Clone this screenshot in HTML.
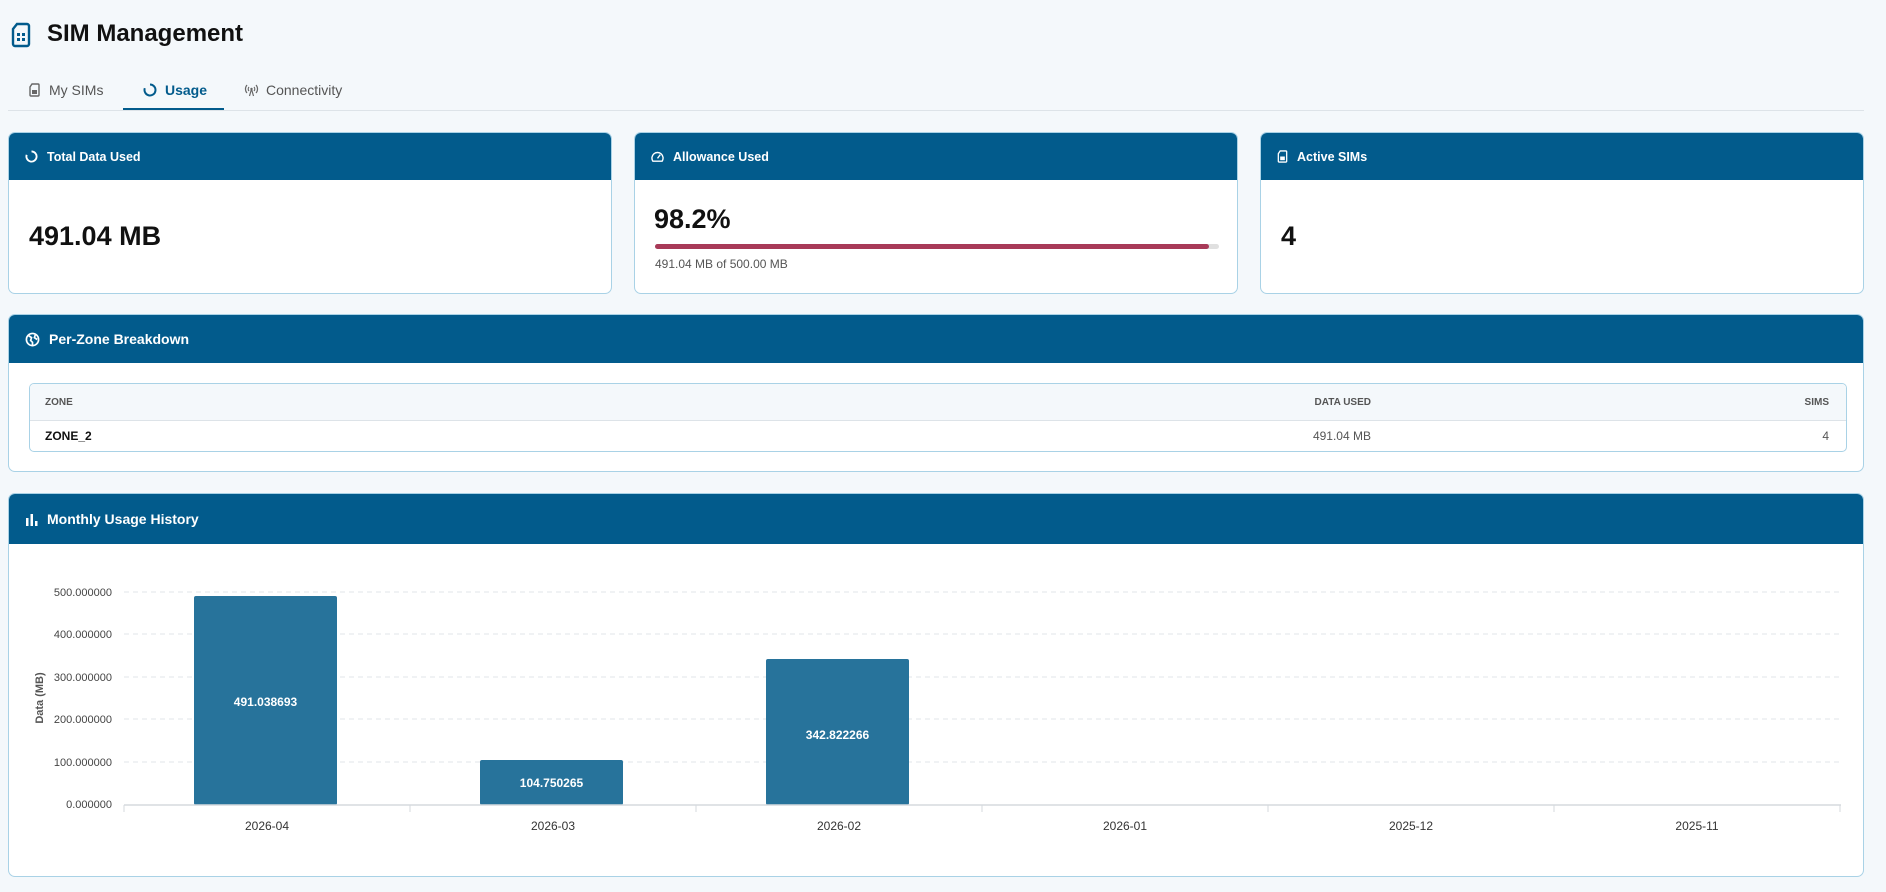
<!DOCTYPE html>
<html><head><meta charset="utf-8"><style>
*{box-sizing:border-box;margin:0;padding:0}
body{width:1886px;height:892px;background:#f4f8fb;font-family:"Liberation Sans",sans-serif;position:relative;overflow:hidden;color:#111}
.a{position:absolute}
.card{position:absolute;background:#fff;border:1px solid #a9d2e6;border-radius:7px;overflow:hidden}
.hd{position:absolute;left:0;top:0;right:0;background:#025b8c;color:#fff;font-weight:bold;display:flex;align-items:center;padding-left:16px}
.hd svg{margin-right:9px}
</style></head><body>
<svg class="a" style="left:11px;top:22px" width="20" height="26" viewBox="0 0 20 26"><path d="M6 2h10a2 2 0 0 1 2 2v18a2 2 0 0 1-2 2H4a2 2 0 0 1-2-2V7z" fill="none" stroke="#025b8c" stroke-width="2.4"/><g fill="#025b8c"><rect x="6" y="11" width="3" height="3"/><rect x="11" y="11" width="3" height="3"/><rect x="6" y="16" width="3" height="3"/><rect x="11" y="16" width="3" height="3"/></g></svg>
<div class="a" style="left:47px;top:20px;font-size:24px;font-weight:bold">SIM Management</div>

<svg class="a" style="left:29px;top:83px" width="11" height="14" viewBox="0 0 11 14"><path d="M3 1h6a1 1 0 0 1 1 1v10a1 1 0 0 1-1 1H2a1 1 0 0 1-1-1V4z" fill="none" stroke="#666" stroke-width="1.4"/><rect x="3" y="7" width="5" height="4" fill="#666"/></svg>
<div class="a" style="left:49px;top:82px;font-size:14px;color:#555">My SIMs</div>
<svg class="a" style="left:143px;top:83px" width="14" height="14" viewBox="0 0 14 14"><path d="M7 1.5a5.5 5.5 0 1 1-5.2 3.7" fill="none" stroke="#025b8c" stroke-width="2"/></svg>
<div class="a" style="left:165px;top:82px;font-size:14px;color:#025b8c;font-weight:bold">Usage</div>
<div class="a" style="left:123px;top:108px;width:101px;height:3px;background:#025b8c"></div>
<svg class="a" style="left:244px;top:83px" width="15" height="14" viewBox="0 0 15 14"><g fill="none" stroke="#666" stroke-width="1.2"><path d="M3 2a6 6 0 0 0 0 8M12 2a6 6 0 0 1 0 8M5 4a3 3 0 0 0 0 4M10 4a3 3 0 0 1 0 4M7.5 6l-2 7M7.5 6l2 7"/></g><circle cx="7.5" cy="6" r="1.2" fill="#666"/></svg>
<div class="a" style="left:266px;top:82px;font-size:14px;color:#555">Connectivity</div>
<div class="a" style="left:8px;top:110px;width:1856px;height:1px;background:#dde3e8"></div>

<div class="card" style="left:8px;top:132px;width:604px;height:162px">
<div class="hd" style="height:47px;font-size:12.5px"><svg width="13" height="13" viewBox="0 0 14 14"><path d="M7 1.5a5.5 5.5 0 1 1-5.2 3.7" fill="none" stroke="#fff" stroke-width="2"/></svg>Total Data Used</div>
<div class="a" style="left:20px;top:88px;font-size:27px;font-weight:bold">491.04 MB</div></div>

<div class="card" style="left:634px;top:132px;width:604px;height:162px">
<div class="hd" style="height:47px;font-size:12.5px"><svg width="13" height="13" viewBox="0 0 14 14"><path d="M2 12a6 6 0 1 1 10 0z" fill="none" stroke="#fff" stroke-width="1.5"/><path d="M7 9l3-4" stroke="#fff" stroke-width="1.5"/></svg>Allowance Used</div>
<div class="a" style="left:19px;top:71px;font-size:27px;font-weight:bold">98.2%</div>
<div class="a" style="left:20px;top:111px;width:564px;height:5px;background:#e0e0e0;border-radius:3px"><div style="width:554px;height:5px;background:#a83a58;border-radius:3px"></div></div>
<div class="a" style="left:20px;top:124px;font-size:12px;color:#555">491.04 MB of 500.00 MB</div></div>

<div class="card" style="left:1260px;top:132px;width:604px;height:162px">
<div class="hd" style="height:47px;font-size:12.5px"><svg width="11" height="13" viewBox="0 0 11 14"><path d="M3 1h6a1 1 0 0 1 1 1v10a1 1 0 0 1-1 1H2a1 1 0 0 1-1-1V4z" fill="none" stroke="#fff" stroke-width="1.4"/><rect x="3" y="7" width="5" height="4" fill="#fff"/></svg>Active SIMs</div>
<div class="a" style="left:20px;top:88px;font-size:27px;font-weight:bold">4</div></div>

<div class="card" style="left:8px;top:314px;width:1856px;height:158px">
<div class="hd" style="height:48px;font-size:14px"><svg width="15" height="15" viewBox="0 0 16 16"><circle cx="8" cy="8" r="6.5" fill="none" stroke="#fff" stroke-width="1.8"/><path d="M4 4l3 2-1 3 2 2v4M11 3l-1 3 3 2" fill="none" stroke="#fff" stroke-width="1.8"/></svg>Per-Zone Breakdown</div>
<div class="a" style="left:20px;top:68px;width:1818px;height:69px;border:1px solid #a9d2e6;border-radius:5px;overflow:hidden">
<div style="height:37px;background:#f4f8fb;border-bottom:1px solid #dde3e8;position:relative;font-size:10px;font-weight:bold;color:#555">
<span class="a" style="left:15px;top:13px">ZONE</span><span class="a" style="right:475px;top:13px">DATA USED</span><span class="a" style="right:17px;top:13px">SIMS</span></div>
<div style="position:relative;height:31px;font-size:12px">
<span class="a" style="left:15px;top:8px;font-weight:bold">ZONE_2</span><span class="a" style="right:475px;top:8px;color:#555">491.04 MB</span><span class="a" style="right:17px;top:8px;color:#555">4</span></div></div></div>

<div class="card" style="left:8px;top:493px;width:1856px;height:384px">
<div class="hd" style="height:50px;font-size:14px"><svg width="13" height="13" viewBox="0 0 13 13"><rect x="1" y="5" width="2.5" height="8" fill="#fff"/><rect x="5.5" y="1" width="2.5" height="12" fill="#fff"/><rect x="10" y="8" width="2.5" height="5" fill="#fff"/></svg>Monthly Usage History</div></div>

<svg class="a" style="left:0;top:0" width="1886" height="892">
<g stroke="#e2e6ea" stroke-dasharray="5 4" stroke-width="1">
<line x1="124" y1="592" x2="1841" y2="592"/><line x1="124" y1="634" x2="1841" y2="634"/><line x1="124" y1="677" x2="1841" y2="677"/><line x1="124" y1="719" x2="1841" y2="719"/><line x1="124" y1="762" x2="1841" y2="762"/></g>
<g font-family="Liberation Sans" font-size="11" fill="#444" text-anchor="end">
<text x="112" y="596">500.000000</text><text x="112" y="638">400.000000</text><text x="112" y="681">300.000000</text><text x="112" y="723">200.000000</text><text x="112" y="766">100.000000</text><text x="112" y="808">0.000000</text></g>
<text transform="translate(43,698) rotate(-90)" font-family="Liberation Sans" font-size="11" font-weight="bold" fill="#555" text-anchor="middle">Data (MB)</text>
<g fill="#27739b"><rect x="194" y="596" width="143" height="209" rx="2"/><rect x="480" y="760" width="143" height="45" rx="2"/><rect x="766" y="659" width="143" height="146" rx="2"/></g>
<g font-family="Liberation Sans" font-size="12" font-weight="bold" fill="#fff" text-anchor="middle">
<text x="265.5" y="706">491.038693</text><text x="551.5" y="787">104.750265</text><text x="837.5" y="739">342.822266</text></g>
<line x1="124" y1="805" x2="1841" y2="805" stroke="#d5dade" stroke-width="1.5"/>
<g stroke="#d5dade"><line x1="124" y1="805" x2="124" y2="812"/><line x1="410" y1="805" x2="410" y2="812"/><line x1="696" y1="805" x2="696" y2="812"/><line x1="982" y1="805" x2="982" y2="812"/><line x1="1268" y1="805" x2="1268" y2="812"/><line x1="1554" y1="805" x2="1554" y2="812"/><line x1="1840" y1="805" x2="1840" y2="812"/></g>
<g font-family="Liberation Sans" font-size="12" fill="#333" text-anchor="middle">
<text x="267" y="830">2026-04</text><text x="553" y="830">2026-03</text><text x="839" y="830">2026-02</text><text x="1125" y="830">2026-01</text><text x="1411" y="830">2025-12</text><text x="1697" y="830">2025-11</text></g>
</svg>
</body></html>
